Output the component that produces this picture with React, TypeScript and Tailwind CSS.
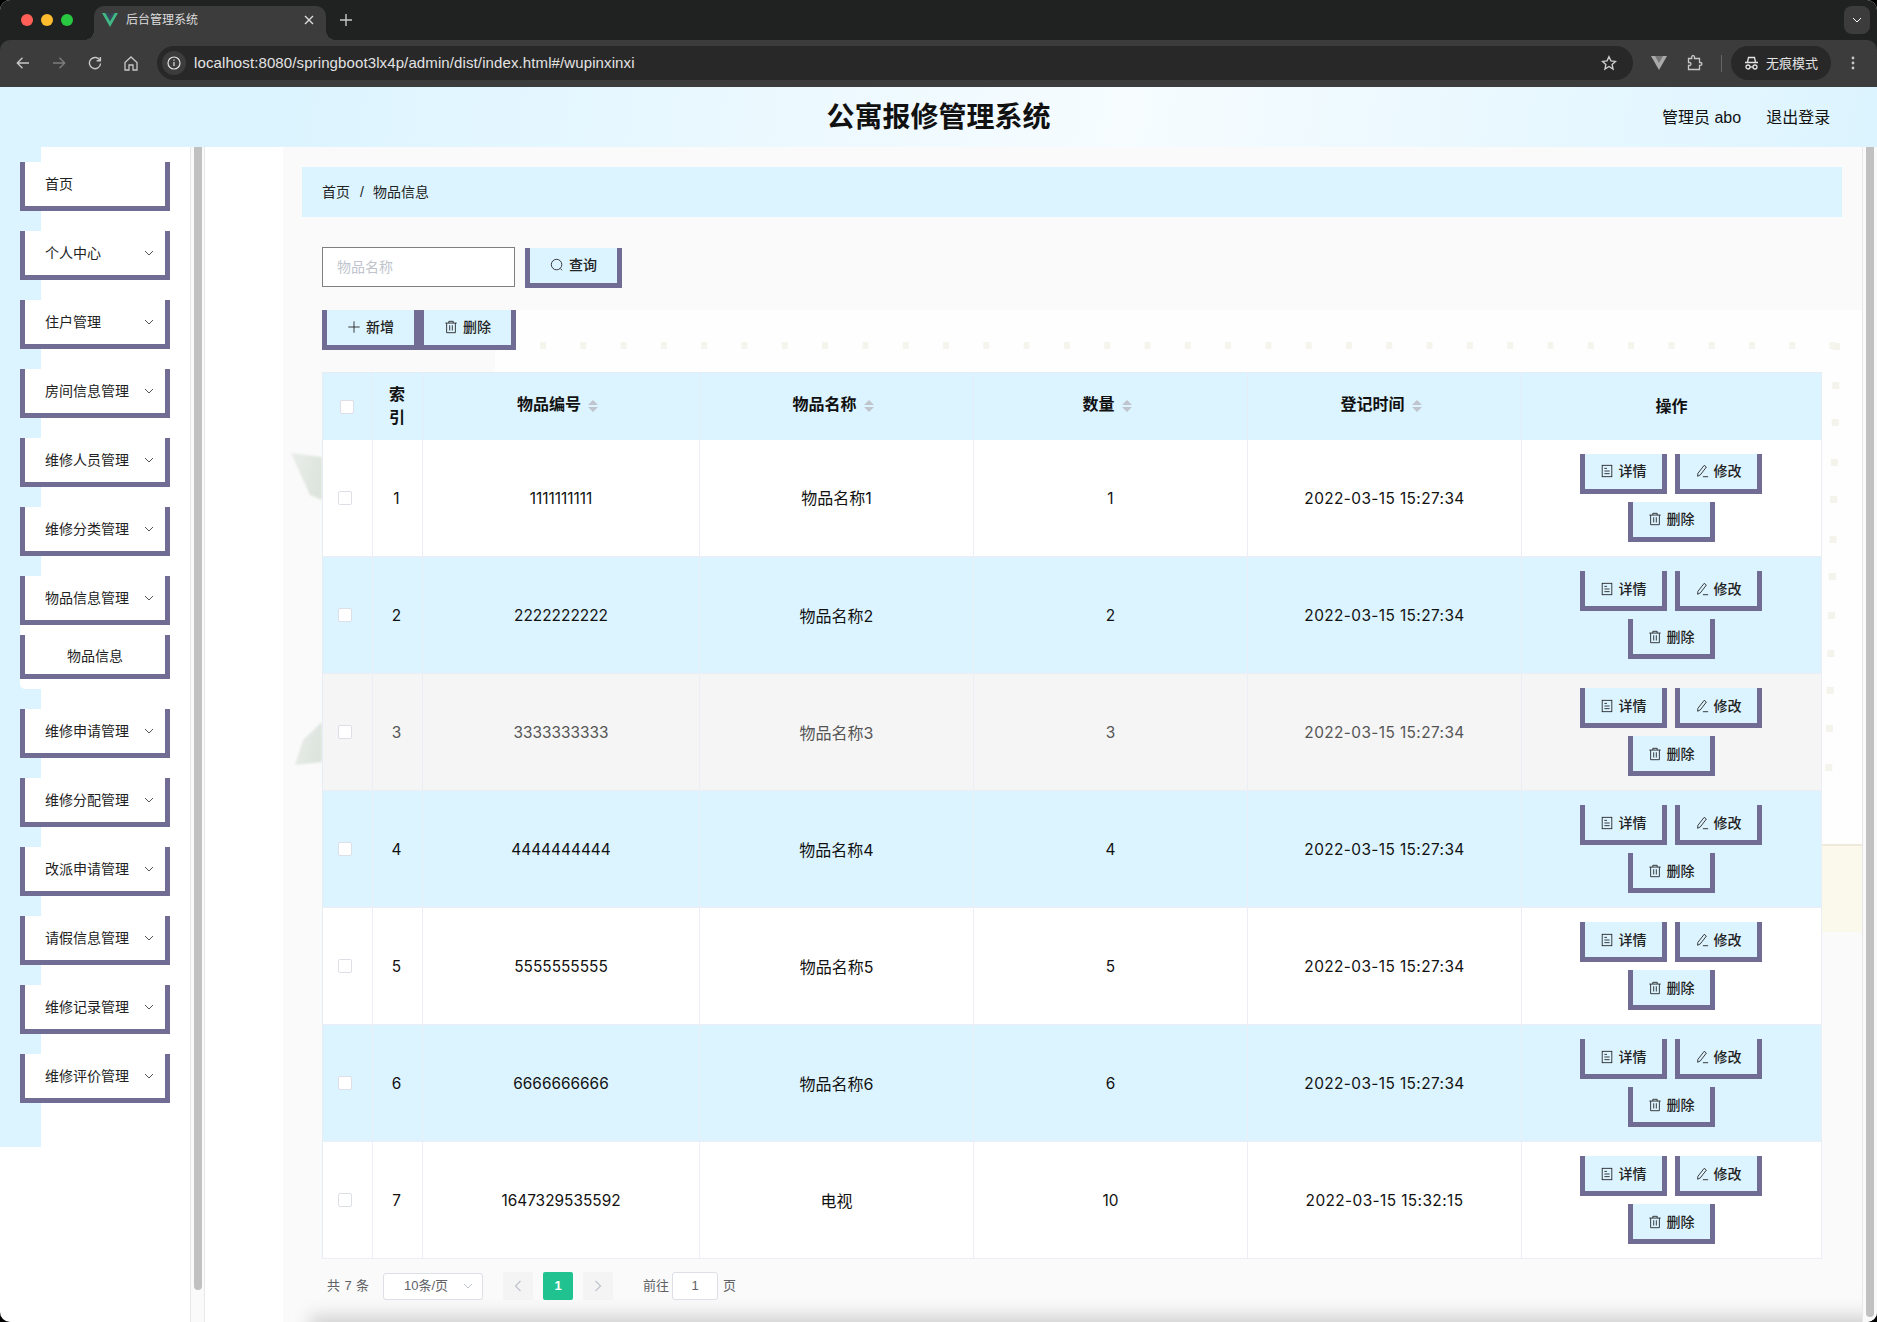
import React from "react";

const Ic = ({ children, size = 14, cls = "" }: { children: React.ReactNode; size?: number; cls?: string }) => (
  <svg width={size} height={size} viewBox="0 0 16 16" fill="none" stroke="currentColor" strokeWidth="1" className={cls}>
    {children}
  </svg>
);
const SearchI = () => (
  <Ic>
    <circle cx="7.5" cy="7.5" r="6" />
    <path d="M11.8 12l2 2" />
  </Ic>
);
const PlusI = () => (
  <Ic>
    <path d="M8 1.5v13M1.5 8h13" />
  </Ic>
);
const TrashI = () => (
  <Ic>
    <path d="M1.5 3.5h13M5.5 3.5V1.5h5v2M3 3.5v11h10v-11M6.5 6v6M9.5 6v6" />
  </Ic>
);
const DocI = () => (
  <Ic>
    <rect x="2.5" y="1.5" width="11" height="13" />
    <path d="M5 5h3M5 8h6M5 11h6" />
  </Ic>
);
const EditI = () => (
  <Ic>
    <path d="M10.5 1.5l2.5 2-7 9-3 1.5.3-3.3zM9 14.5h6" />
  </Ic>
);
const Chev = ({ cls = "" }: { cls?: string }) => (
  <svg width="10" height="6" viewBox="0 0 10 6" fill="none" stroke="currentColor" strokeWidth="1" className={cls}>
    <path d="M1 1l4 4 4-4" />
  </svg>
);

const Btn = ({ icon, label, cls = "" }: { icon: React.ReactNode; label: string; cls?: string }) => (
  <button className={`flex h-10 w-[87px] items-center justify-center gap-[5px] border-x-[5px] border-b-[5px] border-[#706c94] bg-[#dcf4ff] text-sm font-medium text-[#222] ${cls}`}>
    {icon}
    <span>{label}</span>
  </button>
);

const NavItem = ({ label, arrow = true }: { label: string; arrow?: boolean }) => (
  <div className="mb-5 flex h-[49px] w-[150px] items-center justify-between border-x-[5px] border-b-[5px] border-[#706c94] bg-white pl-5 pr-[11px] text-sm text-[#222]">
    <span>{label}</span>
    {arrow && <Chev cls="text-[#555]" />}
  </div>
);

const Sort = () => (
  <span className="ml-[7px] inline-flex flex-col gap-[2px] align-middle">
    <span className="h-0 w-0 border-x-[5px] border-b-[5px] border-x-transparent border-b-[#c0c4cc]" />
    <span className="h-0 w-0 border-x-[5px] border-t-[5px] border-x-transparent border-t-[#c0c4cc]" />
  </span>
);

const Check = ({ cls = "" }: { cls?: string }) => (
  <span className={`inline-block h-[14px] w-[14px] rounded-[2px] border border-[#dcdfe6] bg-white align-middle ${cls}`} />
);

const rows = [
  ["1", "1111111111", "物品名称1", "1", "2022-03-15 15:27:34", "bg-white text-[#111]"],
  ["2", "2222222222", "物品名称2", "2", "2022-03-15 15:27:34", "bg-[#dcf4ff] text-[#111]"],
  ["3", "3333333333", "物品名称3", "3", "2022-03-15 15:27:34", "bg-[#f5f5f5] text-[#555]"],
  ["4", "4444444444", "物品名称4", "4", "2022-03-15 15:27:34", "bg-[#dcf4ff] text-[#111]"],
  ["5", "5555555555", "物品名称5", "5", "2022-03-15 15:27:34", "bg-white text-[#111]"],
  ["6", "6666666666", "物品名称6", "6", "2022-03-15 15:27:34", "bg-[#dcf4ff] text-[#111]"],
  ["7", "1647329535592", "电视", "10", "2022-03-15 15:32:15", "bg-white text-[#111]"],
];

const nav1 = ["个人中心", "住户管理", "房间信息管理", "维修人员管理", "维修分类管理"];
const nav2 = ["维修申请管理", "维修分配管理", "改派申请管理", "请假信息管理", "维修记录管理", "维修评价管理"];

const th = "border-r border-[#e6ecf3] text-center align-middle font-bold text-[#111]";
const thSort = `${th} pr-[7px] pb-[2px]`;
const td = "border-r border-b border-[#ebeef5] text-center align-middle";
const num = `${td} pt-[2px] font-['Inter','Noto_Sans_CJK_SC',sans-serif] text-[15.4px]`;

const Chrome = () => (
  <div className="shrink-0 text-[#c7c7c7]">
    <div className="flex h-10 items-end bg-[#202222] pl-[94px] pr-[7px]">
      <div className="absolute left-[21px] top-[14px] flex gap-2">
        <span className="h-3 w-3 rounded-full bg-[#ff5f57]" />
        <span className="h-3 w-3 rounded-full bg-[#febc2e]" />
        <span className="h-3 w-3 rounded-full bg-[#28c840]" />
      </div>
      <div className="relative flex h-[34px] w-[232px] items-center rounded-t-[10px] bg-[#3c3c3c] pb-[6px] pl-2 pr-3">
        <span className="absolute -left-[10px] bottom-0 h-[10px] w-[10px] bg-[radial-gradient(circle_at_0_0,transparent_10px,#3c3c3c_10px)]" />
        <span className="absolute -right-[10px] bottom-0 h-[10px] w-[10px] bg-[radial-gradient(circle_at_100%_0,transparent_10px,#3c3c3c_10px)]" />
        <svg width="16" height="14" viewBox="0 0 16 14">
          <path d="M0 0h3.4L8 8 12.6 0H16L8 14z" fill="#41b883" />
          <path d="M3.4 0h2.8L8 3.2 9.8 0h2.8L8 8z" fill="#35495e" />
        </svg>
        <span className="ml-2 text-xs text-[#dcdcdc]">后台管理系统</span>
        <svg width="10" height="10" viewBox="0 0 10 10" stroke="#dcdcdc" strokeWidth="1.4" className="ml-auto">
          <path d="M1 1l8 8M9 1l-8 8" />
        </svg>
      </div>
      <svg width="12" height="12" viewBox="0 0 12 12" stroke="#c7c7c7" strokeWidth="1.4" className="mb-[14px] ml-[14px]">
        <path d="M6 0v12M0 6h12" />
      </svg>
      <div className="mb-[6px] ml-auto flex h-7 w-[26px] items-center justify-center rounded-lg bg-[#3c3c3c]">
        <Chev cls="text-white" />
      </div>
    </div>
    <div className="flex h-[47px] items-center rounded-t-[10px] bg-[#3c3c3c] pb-[1px] pl-[16px] pr-[18px] shadow-[0_-10px_0_#202222]">
      <svg width="14" height="14" viewBox="0 0 14 14" fill="none" stroke="#c7c7c7" strokeWidth="1.4">
        <path d="M13 7H1.5M6.5 1.8L1.3 7l5.2 5.2" />
      </svg>
      <svg width="14" height="14" viewBox="0 0 14 14" fill="none" stroke="#7d7d7d" strokeWidth="1.4" className="ml-[22px]">
        <path d="M1 7h11.5M7.5 1.8L12.7 7l-5.2 5.2" />
      </svg>
      <svg width="14" height="14" viewBox="0 0 14 14" fill="none" stroke="#c7c7c7" strokeWidth="1.4" className="ml-[22px]">
        <path d="M12 4.5A5.6 5.6 0 1 0 12.6 7.5M12.4 1v3.8H8.6" />
      </svg>
      <svg width="14" height="15" viewBox="0 0 14 15" fill="none" stroke="#c7c7c7" strokeWidth="1.3" className="ml-[22px]">
        <path d="M1 6.5L7 1l6 5.5V14H9V9H5v5H1z" />
      </svg>
      <div className="ml-[19px] flex h-[34px] w-[1476px] items-center rounded-full bg-[#282828] pl-[5px] pr-[16px]">
        <span className="flex h-6 w-6 items-center justify-center rounded-full bg-[#3c3c3c]">
          <svg width="14" height="14" viewBox="0 0 14 14" fill="none" stroke="#e3e3e3" strokeWidth="1.2">
            <circle cx="7" cy="7" r="6" />
            <path d="M7 6v4M7 3.6v1.2" />
          </svg>
        </span>
        <span className="ml-2 text-[15px] tracking-[0.11px] text-[#e3e3e3]">localhost:8080/springboot3lx4p/admin/dist/index.html#/wupinxinxi</span>
        <svg width="16" height="16" viewBox="0 0 24 24" fill="none" stroke="#d0d0d0" strokeWidth="2" className="ml-auto">
          <path d="M12 2.5l2.9 6.3 6.9.8-5.1 4.7 1.4 6.8L12 17.2l-6.1 3.9 1.4-6.8-5.1-4.7 6.9-.8z" />
        </svg>
      </div>
      <svg width="16" height="14" viewBox="0 0 16 14" className="ml-[18px]">
        <path d="M0 0h16L8 14z" fill="#aaa" />
        <path d="M4 0h8L8 7z" fill="#777" />
      </svg>
      <svg width="16" height="16" viewBox="0 0 16 16" fill="none" stroke="#c7c7c7" strokeWidth="1.3" className="ml-[20px]">
        <path d="M1.5 3.5h3.2V2a1.4 1.4 0 0 1 2.8 0v1.5h5v4h1a1.4 1.4 0 0 1 0 2.8h-1v4.2h-11v-4h1a1.5 1.5 0 0 0 0-3h-1z" />
      </svg>
      <span className="ml-[18px] h-[17px] w-[1px] bg-[#666]" />
      <div className="ml-[9px] flex h-[34px] w-[100px] items-center rounded-full bg-[#282828] pl-[13px] text-[13px] text-[#e3e3e3]">
        <svg width="15" height="14" viewBox="0 0 15 14" fill="none" stroke="#e3e3e3" strokeWidth="1.3">
          <path d="M3.5 6l1-4.5h6l1 4.5M1 6.5h13" />
          <circle cx="4" cy="11" r="2" />
          <circle cx="11" cy="11" r="2" />
          <path d="M6 11h3" />
        </svg>
        <span className="ml-[7px] pt-[1px]">无痕模式</span>
      </div>
      <svg width="4" height="14" viewBox="0 0 4 14" fill="#c7c7c7" className="ml-[20px]">
        <circle cx="2" cy="2" r="1.4" />
        <circle cx="2" cy="7" r="1.4" />
        <circle cx="2" cy="12" r="1.4" />
      </svg>
    </div>
  </div>
);

const Backdrop = () => {
  const top: number[] = [];
  for (let x = 540; x < 1830; x += 40.3) top.push(x);
  const side = [346, 385, 422, 462, 499, 539, 576, 615, 653, 690, 728, 767];
  return (
    <svg width="1579" height="1175" viewBox="283 147 1579 1175" className="absolute left-0 top-0">
      <defs>
        <linearGradient id="leafA" x1="0" y1="0" x2="1" y2="0.4">
          <stop offset="0" stopColor="#e9ede9" />
          <stop offset="1" stopColor="#dde4dd" />
        </linearGradient>
        <filter id="soft" x="-5%" y="-200%" width="110%" height="500%">
          <feGaussianBlur stdDeviation="9" />
        </filter>
        <filter id="leafSoft">
          <feGaussianBlur stdDeviation="0.8" />
        </filter>
      </defs>
      <rect x="283" y="147" width="1579" height="1175" fill="#fafafa" />
      <rect x="495" y="310" width="1367" height="536" fill="#fefefe" />
      <rect x="1822" y="846" width="40" height="86" fill="#fbf8ec" />
      <rect x="1822" y="844" width="40" height="2" fill="#eee8dd" />
      {top.map((x) => (
        <rect key={x} x={x} y="342" width="6" height="7" fill="#f5f5ee" />
      ))}
      {side.map((y, i) => (
        <rect key={y} x={1833 - i * 0.7} y={y - 3} width="7" height="7" fill="#f4f4ec" />
      ))}
      <path d="M291 453l31 4v43l-12-5z" fill="url(#leafA)" filter="url(#leafSoft)" />
      <path d="M295 765l8-25 19-18v40z" fill="url(#leafA)" filter="url(#leafSoft)" />
      <rect x="310" y="1316" width="1600" height="24" fill="#cfcfcf" filter="url(#soft)" />
    </svg>
  );
};

export default function App() {
  return (
    <div className="h-[1322px] w-[1877px] overflow-hidden bg-black font-['Liberation_Sans','Noto_Sans_CJK_SC',sans-serif]">
      <div className="relative flex h-full flex-col overflow-hidden rounded-[10px] bg-white">
        <Chrome />
        <header className="flex h-[60px] shrink-0 items-center bg-[linear-gradient(100deg,#dcf4ff_15%,#f6fcff_60%,#dcf4ff_100%)] pr-[46px] pt-[2px] text-[#111]">
          <div className="w-[1662px] pl-[215px] text-center text-[28px] font-bold leading-none">公寓报修管理系统</div>
          <span className="text-base">管理员 abo</span>
          <span className="ml-[25px] text-base">退出登录</span>
        </header>
        <div className="flex min-h-0 flex-1">
          <aside className="w-[190px] shrink-0 bg-[linear-gradient(#dcf4ff,#dcf4ff)] bg-[length:41px_1000px] bg-no-repeat pl-5 pt-[15px]">
            <NavItem label="首页" arrow={false} />
            {nav1.map((n) => (
              <NavItem key={n} label={n} />
            ))}
            <NavItem label="物品信息管理" />
            <div className="-mt-5 mb-5 w-[150px] rounded-b-[5px] bg-white pb-[10px] pt-[10px]">
              <div className="flex h-[44px] items-center justify-center border-x-[5px] border-b-[5px] border-[#706c94] pt-[2px] text-sm text-[#222]">物品信息</div>
            </div>
            {nav2.map((n) => (
              <NavItem key={n} label={n} />
            ))}
          </aside>
          <div className="flex w-[15px] shrink-0 justify-center border-x border-[#e8e8e8] bg-[#fafafa]">
            <div className="h-[1143px] w-2 rounded-b-[4px] bg-[#c1c1c1]" />
          </div>
          <div className="w-[78px] shrink-0 bg-white" />
          <main className="relative min-w-0 flex-1 overflow-hidden">
            <Backdrop />
            <div className="relative pl-[19px] pr-5 pt-5">
              <div className="flex h-[50px] items-center bg-[#dcf4ff] pl-5 text-sm text-[#222]">
                <span>首页</span>
                <span className="ml-[10px] mr-[9px] font-medium">/</span>
                <span>物品信息</span>
              </div>
              <div className="px-5">
                <div className="mt-[30px] flex items-start">
                  <div className="flex h-10 w-[193px] items-center border border-[#808080] bg-white pl-[14px] text-sm text-[#c0c4cc]">物品名称</div>
                  <Btn icon={<SearchI />} label="查询" cls="ml-[10px] mt-[1px] w-[97px] pb-[1px]" />
                </div>
                <div className="mt-[22px] flex">
                  <Btn icon={<PlusI />} label="新增" cls="w-[97px] pb-[1px]" />
                  <Btn icon={<TrashI />} label="删除" cls="w-[97px] pb-[1px]" />
                </div>
                <table className="mt-[22px] w-[1499px] table-fixed border-collapse border-l border-t border-[#e6ecf3] text-base">
                  <colgroup>
                    <col className="w-[50px]" />
                    <col className="w-[50px]" />
                    <col className="w-[277px]" />
                    <col className="w-[274px]" />
                    <col className="w-[274px]" />
                    <col className="w-[274px]" />
                    <col className="w-[300px]" />
                  </colgroup>
                  <thead>
                    <tr className="h-[67px] bg-[#dcf4ff]">
                      <th className={th}>
                        <Check cls="mr-[2px]" />
                      </th>
                      <th className={`${th} pr-[1px] leading-[23px]`}>
                        索<br />引
                      </th>
                      <th className={thSort}>
                        物品编号
                        <Sort />
                      </th>
                      <th className={thSort}>
                        物品名称
                        <Sort />
                      </th>
                      <th className={thSort}>
                        数量
                        <Sort />
                      </th>
                      <th className={thSort}>
                        登记时间
                        <Sort />
                      </th>
                      <th className={`${th} pt-[2px]`}>操作</th>
                    </tr>
                  </thead>
                  <tbody>
                    {rows.map((r) => (
                      <tr key={r[0]} className={`h-[117px] ${r[5]}`}>
                        <td className={td}>
                          <Check cls="mb-[2px] mr-[6px]" />
                        </td>
                        <td className={`${num} pr-[2px]`}>{r[0]}</td>
                        <td className={num}>{r[1]}</td>
                        <td className={`${td} pt-[1px] font-['Inter','Noto_Sans_CJK_SC',sans-serif]`}>{r[2]}</td>
                        <td className={num}>{r[3]}</td>
                        <td className={`${num} tracking-[0.4px]`}>{r[4]}</td>
                        <td className={`${td} pr-[2px]`}>
                          <div className="mx-auto flex w-[182px] flex-wrap justify-center gap-2">
                            <Btn icon={<DocI />} label="详情" />
                            <Btn icon={<EditI />} label="修改" />
                            <Btn icon={<TrashI />} label="删除" cls="ml-[1px]" />
                          </div>
                        </td>
                      </tr>
                    ))}
                  </tbody>
                </table>
                <div className="mt-[13px] flex h-7 items-center pl-[5px] text-[13px] text-[#606266]">
                  <span className="w-[56px] tracking-[0.4px]">共 7 条</span>
                  <div className="flex h-[27px] w-[100px] items-center rounded-[3px] border border-[#dcdfe6] bg-white pl-5 pr-[9px]">
                    <span>10条/页</span>
                    <Chev cls="ml-auto text-[#c0c4cc]" />
                  </div>
                  <span className="ml-5 flex h-7 w-[30px] items-center justify-center rounded-[2px] bg-[#f4f4f5] text-[#c0c4cc]">
                    <svg width="8" height="12" viewBox="0 0 8 12" fill="none" stroke="currentColor" strokeWidth="1.2">
                      <path d="M6.5 1L1.5 6l5 5" />
                    </svg>
                  </span>
                  <span className="ml-[10px] flex h-7 w-[30px] items-center justify-center rounded-[2px] bg-[#20c28f] font-bold text-white">1</span>
                  <span className="ml-[10px] flex h-7 w-[30px] items-center justify-center rounded-[2px] bg-[#f4f4f5] text-[#c0c4cc]">
                    <svg width="8" height="12" viewBox="0 0 8 12" fill="none" stroke="currentColor" strokeWidth="1.2">
                      <path d="M1.5 1l5 5-5 5" />
                    </svg>
                  </span>
                  <span className="ml-[30px]">前往</span>
                  <span className="ml-[3px] flex h-7 w-[46px] items-center justify-center rounded-[3px] border border-[#dcdfe6] bg-white">1</span>
                  <span className="ml-[5px]">页</span>
                </div>
              </div>
            </div>
          </main>
          <div className="flex w-[15px] shrink-0 justify-center border-l border-[#e8e8e8] bg-[#fafafa]">
            <div className="h-[1170px] w-2 rounded-b-[4px] bg-[#c1c1c1]" />
          </div>
        </div>
      </div>
    </div>
  );
}
